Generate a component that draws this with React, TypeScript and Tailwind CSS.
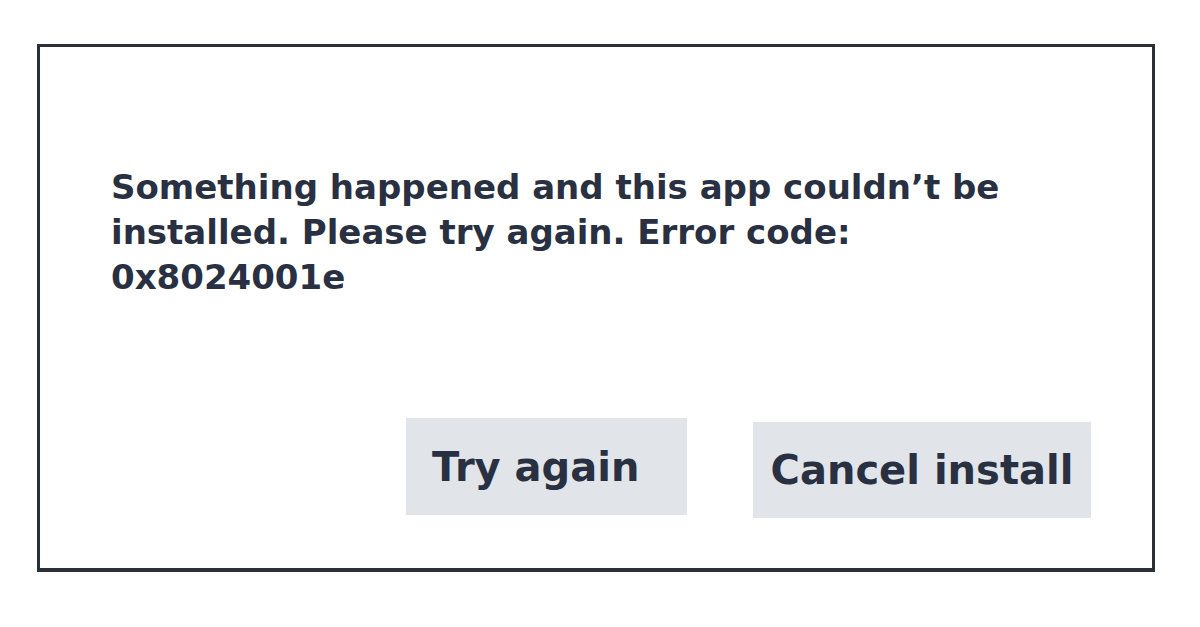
import type { FC } from 'react';

const font = { fontFamily: '"DejaVu Sans", "Liberation Sans", sans-serif' };

const App: FC = () => {
    return (
        <div className="w-[1200px] h-[627px] bg-white pt-[44px] pl-[37px]" style={font}>
            {/* Dialog */}
            <div className="w-[1118px] h-[528px] border-[3px] border-b-4 border-[#2a2f39] bg-white flex flex-col pt-[118px] pl-[71px] pr-[61px]">
                <p className="text-[34px] leading-[45px] font-bold text-[#283041] w-[940px]">
                    Something happened and this app couldn’t be installed. Please try again. Error code: 0x8024001e
                </p>

                <div className="flex justify-end gap-[66px] mt-[118px]">
                    <button className="w-[281px] h-[97px] bg-[#e1e5e9] flex items-center pl-[26px] text-[40px] font-bold text-[#283041] whitespace-nowrap">
                        Try again
                    </button>
                    <button className="w-[338px] h-[96px] mt-[4px] bg-[#e1e5e9] flex items-center justify-center text-[40px] font-bold text-[#283041] whitespace-nowrap">
                        Cancel install
                    </button>
                </div>
            </div>
        </div>
    );
};

export default App;
